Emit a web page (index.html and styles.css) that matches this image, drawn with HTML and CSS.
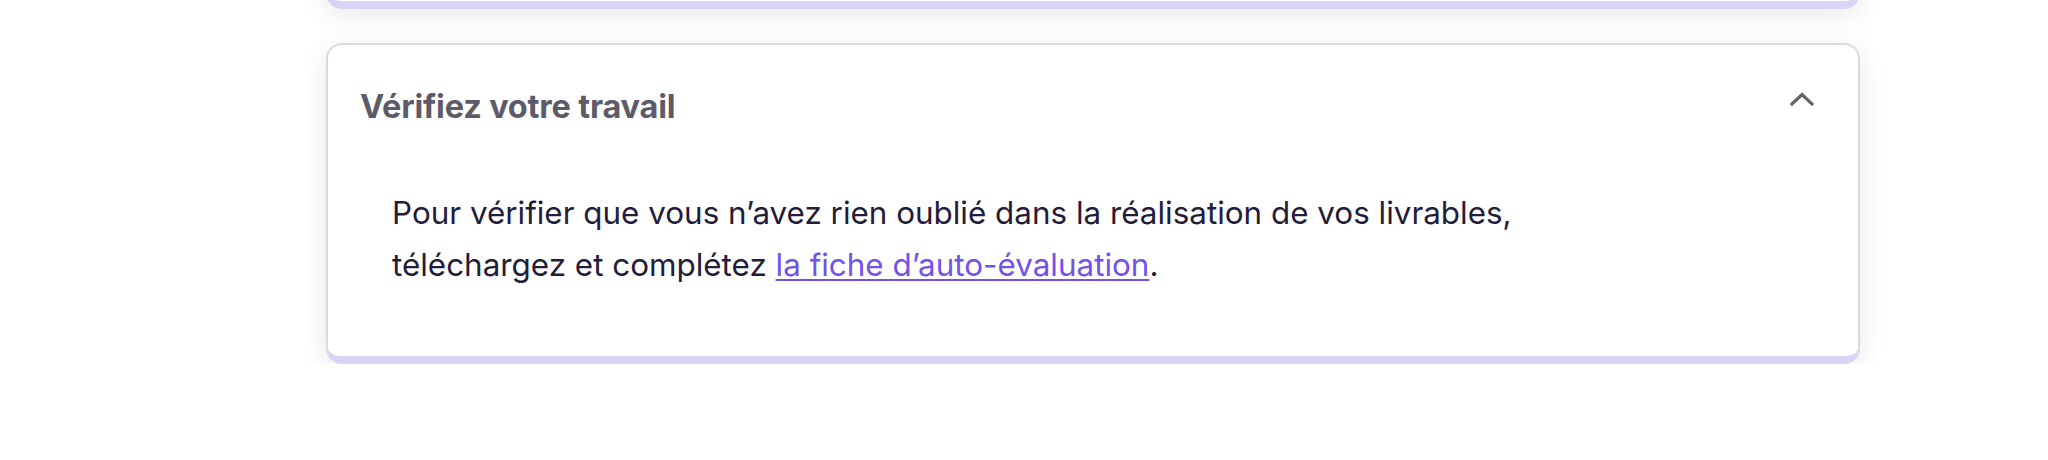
FILE: index.html
```html
<!DOCTYPE html>
<html lang="fr">
<head>
<meta charset="utf-8">
<title>Vérifiez votre travail</title>
<link rel="stylesheet" href="styles.css">
</head>
<body>
<main class="page">
  <div class="card card--prev"></div>
  <section class="card">
    <header class="card-header">
      <h3 class="card-title">Vérifiez votre travail</h3>
      <button class="toggle" aria-label="Replier">
        <svg width="24" height="16" viewBox="0 0 24 16" aria-hidden="true">
          <path d="M2 13 L12 3.5 L22 13" fill="none" stroke="#666" stroke-width="3.2" stroke-linecap="square" stroke-linejoin="miter"/>
        </svg>
      </button>
    </header>
    <div class="card-body">
      <p>Pour vérifier que vous n’avez rien oublié dans la réalisation de vos livrables,<br>téléchargez et complétez <a href="#">la fiche d’auto-évaluation</a>.</p>
    </div>
  </section>
</main>
</body>
</html>
```
FILE: styles.css
```css
* { box-sizing: border-box; }
html, body { margin: 0; padding: 0; background: #ffffff; }
body { font-family: Inter, "Noto Sans", sans-serif; overflow: hidden; }

.page {
  width: 1534px;
  margin-left: 326px;
  display: flex;
  flex-direction: column;
  gap: 34px;
}

.card {
  background: #ffffff;
  border: 2px solid #dadada;
  border-bottom: 8px solid #d9d3f5;
  border-radius: 16px;
  box-shadow: 0 6px 28px rgba(0, 0, 0, 0.09);
}

.card--prev {
  height: 60px;
  margin-top: -51px;
}

.card-header {
  display: flex;
  justify-content: space-between;
  align-items: flex-start;
  padding: 44px 44px 0 32px;
}

.card-title {
  margin: 0;
  font-size: 32.5px;
  line-height: 36px;
  font-weight: 700;
  color: #5e5b69;
  letter-spacing: -0.2px;
}

.toggle {
  border: 0;
  background: none;
  padding: 0;
  margin-top: 2px;
  display: flex;
  cursor: pointer;
}

.card-body {
  padding: 62px 32px 65px 64px;
}

.card-body p {
  margin: 0;
  font-size: 31.4px;
  line-height: 52px;
  color: #231c3a;
}

.card-body a {
  color: #7451eb;
  text-decoration: underline;
  text-underline-offset: 3px;
  text-decoration-thickness: 2px;
}
```
